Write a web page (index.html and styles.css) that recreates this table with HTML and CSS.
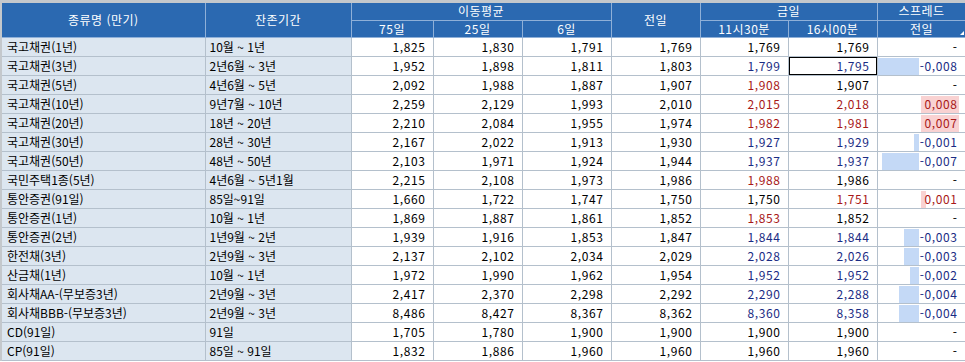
FILE: index.html
```html
<!DOCTYPE html>
<html lang="ko">
<head>
    <meta charset="UTF-8">
    <title>금리 현황</title>
    <link rel="stylesheet" href="styles.css">
</head>
<body>
    <div class="grid-wrap">
        <table class="rate-grid">
            <colgroup>
                <col class="c-name">
                <col class="c-term">
                <col class="c-ma75">
                <col class="c-num">
                <col class="c-num">
                <col class="c-num">
                <col class="c-num2">
                <col class="c-num">
                <col class="c-num">
            </colgroup>
            <thead>
                <tr class="h1">
                    <th rowspan="2">종류명 (만기)</th>
                    <th rowspan="2">잔존기간</th>
                    <th colspan="3">이동평균</th>
                    <th rowspan="2">전일</th>
                    <th colspan="2">금일</th>
                    <th>스프레드</th>
                </tr>
                <tr class="h2">
                    <th>75일</th>
                    <th>25일</th>
                    <th>6일</th>
                    <th>11시30분</th>
                    <th>16시00분</th>
                    <th class="sortable">전일</th>
                </tr>
            </thead>
            <tbody>
                <tr>
                    <td class="name">국고채권(1년)</td><td class="term">10월 ~ 1년</td>
                    <td>1,825</td><td>1,830</td><td>1,791</td><td>1,769</td>
                    <td>1,769</td><td>1,769</td>
                    <td class="spread"><div class="sp"><div class="neg"></div><div class="val">-</div></div></td>
                </tr>
                <tr>
                    <td class="name">국고채권(3년)</td><td class="term">2년6월 ~ 3년</td>
                    <td>1,952</td><td>1,898</td><td>1,811</td><td>1,803</td>
                    <td class="dn">1,799</td><td class="dn sel">1,795</td>
                    <td class="spread"><div class="sp"><div class="neg"><span class="bar" style="width:41px"></span></div><div class="val dn">-0,008</div></div></td>
                </tr>
                <tr>
                    <td class="name">국고채권(5년)</td><td class="term">4년6월 ~ 5년</td>
                    <td>2,092</td><td>1,988</td><td>1,887</td><td>1,907</td>
                    <td class="up">1,908</td><td>1,907</td>
                    <td class="spread"><div class="sp"><div class="neg"></div><div class="val">-</div></div></td>
                </tr>
                <tr>
                    <td class="name">국고채권(10년)</td><td class="term">9년7월 ~ 10년</td>
                    <td>2,259</td><td>2,129</td><td>1,993</td><td>2,010</td>
                    <td class="up">2,015</td><td class="up">2,018</td>
                    <td class="spread"><div class="sp"><div class="neg"></div><div class="val up pos" style="--w:38px">0,008</div></div></td>
                </tr>
                <tr>
                    <td class="name">국고채권(20년)</td><td class="term">18년 ~ 20년</td>
                    <td>2,210</td><td>2,084</td><td>1,955</td><td>1,974</td>
                    <td class="up">1,982</td><td class="up">1,981</td>
                    <td class="spread"><div class="sp"><div class="neg"></div><div class="val up pos" style="--w:38px">0,007</div></div></td>
                </tr>
                <tr>
                    <td class="name">국고채권(30년)</td><td class="term">28년 ~ 30년</td>
                    <td>2,167</td><td>2,022</td><td>1,913</td><td>1,930</td>
                    <td class="dn">1,927</td><td class="dn">1,929</td>
                    <td class="spread"><div class="sp"><div class="neg"><span class="bar" style="width:5px"></span></div><div class="val dn">-0,001</div></div></td>
                </tr>
                <tr>
                    <td class="name">국고채권(50년)</td><td class="term">48년 ~ 50년</td>
                    <td>2,103</td><td>1,971</td><td>1,924</td><td>1,944</td>
                    <td class="dn">1,937</td><td class="dn">1,937</td>
                    <td class="spread"><div class="sp"><div class="neg"><span class="bar" style="width:37px"></span></div><div class="val dn">-0,007</div></div></td>
                </tr>
                <tr>
                    <td class="name">국민주택1종(5년)</td><td class="term">4년6월 ~ 5년1월</td>
                    <td>2,215</td><td>2,108</td><td>1,973</td><td>1,986</td>
                    <td class="up">1,988</td><td>1,986</td>
                    <td class="spread"><div class="sp"><div class="neg"></div><div class="val">-</div></div></td>
                </tr>
                <tr>
                    <td class="name">통안증권(91일)</td><td class="term">85일~91일</td>
                    <td>1,660</td><td>1,722</td><td>1,747</td><td>1,750</td>
                    <td>1,750</td><td class="up">1,751</td>
                    <td class="spread"><div class="sp"><div class="neg"></div><div class="val up pos" style="--w:5px">0,001</div></div></td>
                </tr>
                <tr>
                    <td class="name">통안증권(1년)</td><td class="term">10월 ~ 1년</td>
                    <td>1,869</td><td>1,887</td><td>1,861</td><td>1,852</td>
                    <td class="up">1,853</td><td>1,852</td>
                    <td class="spread"><div class="sp"><div class="neg"></div><div class="val">-</div></div></td>
                </tr>
                <tr>
                    <td class="name">통안증권(2년)</td><td class="term">1년9월 ~ 2년</td>
                    <td>1,939</td><td>1,916</td><td>1,853</td><td>1,847</td>
                    <td class="dn">1,844</td><td class="dn">1,844</td>
                    <td class="spread"><div class="sp"><div class="neg"><span class="bar" style="width:15px"></span></div><div class="val dn">-0,003</div></div></td>
                </tr>
                <tr>
                    <td class="name">한전채(3년)</td><td class="term">2년9월 ~ 3년</td>
                    <td>2,137</td><td>2,102</td><td>2,034</td><td>2,029</td>
                    <td class="dn">2,028</td><td class="dn">2,026</td>
                    <td class="spread"><div class="sp"><div class="neg"><span class="bar" style="width:15px"></span></div><div class="val dn">-0,003</div></div></td>
                </tr>
                <tr>
                    <td class="name">산금채(1년)</td><td class="term">10월 ~ 1년</td>
                    <td>1,972</td><td>1,990</td><td>1,962</td><td>1,954</td>
                    <td class="dn">1,952</td><td class="dn">1,952</td>
                    <td class="spread"><div class="sp"><div class="neg"><span class="bar" style="width:9px"></span></div><div class="val dn">-0,002</div></div></td>
                </tr>
                <tr>
                    <td class="name">회사채AA-(무보증3년)</td><td class="term">2년9월 ~ 3년</td>
                    <td>2,417</td><td>2,370</td><td>2,298</td><td>2,292</td>
                    <td class="dn">2,290</td><td class="dn">2,288</td>
                    <td class="spread"><div class="sp"><div class="neg"><span class="bar" style="width:20px"></span></div><div class="val dn">-0,004</div></div></td>
                </tr>
                <tr>
                    <td class="name">회사채BBB-(무보증3년)</td><td class="term">2년9월 ~ 3년</td>
                    <td>8,486</td><td>8,427</td><td>8,367</td><td>8,362</td>
                    <td class="dn">8,360</td><td class="dn">8,358</td>
                    <td class="spread"><div class="sp"><div class="neg"><span class="bar" style="width:20px"></span></div><div class="val dn">-0,004</div></div></td>
                </tr>
                <tr>
                    <td class="name">CD(91일)</td><td class="term">91일</td>
                    <td>1,705</td><td>1,780</td><td>1,900</td><td>1,900</td>
                    <td>1,900</td><td>1,900</td>
                    <td class="spread"><div class="sp"><div class="neg"></div><div class="val">-</div></div></td>
                </tr>
                <tr>
                    <td class="name">CP(91일)</td><td class="term">85일 ~ 91일</td>
                    <td>1,832</td><td>1,886</td><td>1,960</td><td>1,960</td>
                    <td>1,960</td><td>1,960</td>
                    <td class="spread"><div class="sp"><div class="neg"></div><div class="val">-</div></div></td>
                </tr>
            </tbody>
        </table>
    </div>
</body>
</html>
```

FILE: styles.css
```css
* {
    margin: 0;
    padding: 0;
    box-sizing: border-box;
}

body {
    font-family: "Noto Sans CJK KR", "Noto Sans", sans-serif;
    font-size: 12px;
    background: #ffffff;
    overflow: hidden;
}

.grid-wrap {
    border-top: 3px solid #c4c8cc;
    border-left: 2px solid #c4c8cc;
}

.rate-grid {
    border-collapse: collapse;
    table-layout: fixed;
    width: 964px;
}

.c-name { width: 203px; }
.c-term { width: 146px; }
.c-ma75 { width: 82px; }
.c-num { width: 89px; }
.c-num2 { width: 88px; }

/* header */
.rate-grid th {
    background: #2b69b1;
    color: #ffffff;
    font-weight: 400;
    text-align: center;
    border: 1px solid #8fb0d8;
    border-top: none;
    line-height: 16px;
    padding: 0;
    letter-spacing: 0.5px;
}

.rate-grid tr.h1 th {
    height: 17px;
}

.rate-grid tr.h2 th {
    height: 17px;
}

.rate-grid thead tr:first-child th:first-child {
    border-left: none;
}

.rate-grid th.sortable {
    position: relative;
}

.rate-grid th.sortable::after {
    content: "";
    position: absolute;
    right: 2px;
    bottom: 2px;
    border-left: 4px solid transparent;
    border-bottom: 4px solid #ffffff;
}

/* body */
.rate-grid td {
    height: 19px;
    border: 1px solid #b4c0cc;
    line-height: 17px;
    padding: 0 7px 0 0;
    text-align: right;
    color: #000000;
    letter-spacing: 0.6px;
    white-space: nowrap;
    overflow: hidden;
}

.rate-grid td.name,
.rate-grid td.term {
    background: #dce6f0;
    text-align: left;
    letter-spacing: 0;
}

.rate-grid td.name {
    padding-left: 5px;
    border-left: none;
}

.rate-grid td.term {
    padding-left: 4px;
}

.rate-grid td.up {
    color: #a81818;
}

.rate-grid td.dn {
    color: #1a2c84;
}

.rate-grid td.sel {
    box-shadow: inset 0 0 0 1px #000000;
}

/* spread column */
.rate-grid td.spread {
    padding: 0;
}

.sp {
    display: flex;
    height: 18px;
}

.sp .neg {
    width: 43px;
    display: flex;
    justify-content: flex-end;
    padding: 1px 1px 0 0;
}

.sp .bar {
    display: block;
    height: 17px;
    background: #c4d9f6;
}

.sp .val {
    flex: 1;
    text-align: right;
    padding-right: 8px;
}

.sp .val.up {
    color: #a81818;
}

.sp .val.dn {
    color: #1a2c84;
}

.sp .val.pos {
    background: linear-gradient(#f9d2d2, #f9d2d2) no-repeat 0 1px / var(--w) 17px;
}
```
